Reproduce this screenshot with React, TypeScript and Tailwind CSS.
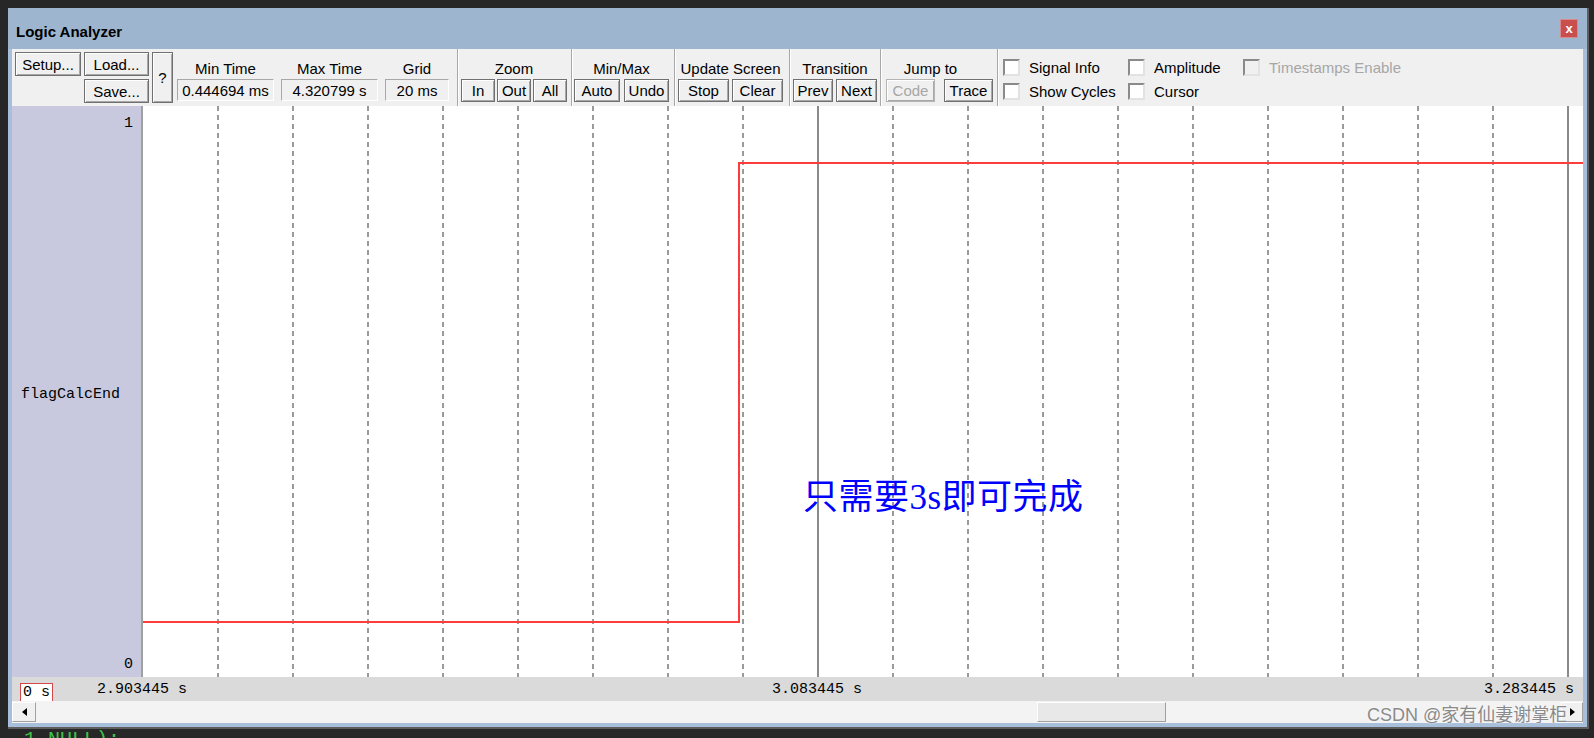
import React from "react";

const sans = "font-[family-name:Liberation_Sans,Arial,sans-serif]";
const mono = "font-[family-name:Liberation_Mono,monospace]";

function Btn({
  className = "",
  disabled = false,
  children,
}: {
  className?: string;
  disabled?: boolean;
  children: React.ReactNode;
}) {
  const tone = disabled
    ? "border-[#b4b4b4] text-[#a6a6a6]"
    : "border-[#707070] text-black";
  return (
    <div
      className={`flex items-center justify-center whitespace-nowrap border bg-[#f0f0f0] shadow-[inset_1px_1px_0_#ffffff,inset_-1px_-1px_0_#a8a8a8] ${tone} ${className}`}
    >
      {children}
    </div>
  );
}

function Sep({ className = "" }: { className?: string }) {
  return (
    <div
      className={`h-full w-[2px] border-l border-r border-l-[#a8a8a8] border-r-white ${className}`}
    />
  );
}

function Label({ children }: { children: React.ReactNode }) {
  return (
    <div className="flex h-[30px] items-end whitespace-nowrap pb-[2px]">
      {children}
    </div>
  );
}

function ValueBox({ label, value, className = "" }: { label: string; value: string; className?: string }) {
  return (
    <div className={`flex flex-col items-center ${className}`}>
      <Label>{label}</Label>
      <div className="flex h-[22px] w-full items-center justify-center whitespace-nowrap border border-t-[#a8a8a8] border-l-[#a8a8a8] border-r-white border-b-white">
        {value}
      </div>
    </div>
  );
}

function Check({ label, disabled = false }: { label: string; disabled?: boolean }) {
  return (
    <div className="flex h-[17px] items-center">
      <div
        className={`h-[17px] w-[17px] border-2 border-t-[#8a8a8a] border-l-[#8a8a8a] border-r-[#e2e2e2] border-b-[#e2e2e2] ${
          disabled ? "bg-[#f0f0f0]" : "bg-white"
        }`}
      />
      <span className={`ml-[9px] whitespace-nowrap ${disabled ? "text-[#a6a6a6]" : "text-black"}`}>
        {label}
      </span>
    </div>
  );
}

const gridLines = Array.from({ length: 19 }, (_, i) => (i + 1) * 75);

export default function App() {
  return (
    <div className={`h-[738px] w-[1594px] overflow-hidden bg-[#272727] ${sans}`}>
      <div className="ml-[8px] mt-[8px] w-[1581px] border-b-2 border-r-2 border-[#5e5e5e]">
        {/* window */}
        <div className="w-[1579px] bg-[#a7bfda]">
          {/* title bar */}
          <div className="flex h-[41px] items-start bg-[#9db5cf] pl-[8px] pr-[9px]">
            <span className="mt-[15px] text-[15px] font-bold leading-[17px] text-black">
              Logic Analyzer
            </span>
            <div className="ml-auto mt-[11px] flex h-[19px] w-[18px] items-center justify-center border border-[#d98a8a] bg-[#c94f4f] text-[13px] font-bold leading-none text-white">
              x
            </div>
          </div>

          <div className="px-[4px] pb-[4px]">
            {/* toolbar */}
            <div className="flex h-[57px] bg-[#f0f0f0] pl-[3px] text-[15px] leading-[17px] text-black">
              <div className="grid grid-cols-[66px_65px_21px] grid-rows-[24px_24px] gap-[3px] pt-[3px]">
                <Btn>Setup...</Btn>
                <Btn>Load...</Btn>
                <Btn className="row-span-2">?</Btn>
                <div />
                <Btn>Save...</Btn>
              </div>
              <ValueBox className="ml-[4px] w-[97px]" label="Min Time" value="0.444694 ms" />
              <ValueBox className="ml-[7px] w-[97px]" label="Max Time" value="4.320799 s" />
              <ValueBox className="ml-[7px] w-[64px]" label="Grid" value="20 ms" />
              <Sep className="ml-[8px]" />

              <div className="ml-[2px] flex flex-col items-center">
                <Label>Zoom</Label>
                <div className="flex gap-[2px]">
                  <Btn className="h-[23px] w-[34px]">In</Btn>
                  <Btn className="h-[23px] w-[34px]">Out</Btn>
                  <Btn className="h-[23px] w-[34px]">All</Btn>
                </div>
              </div>
              <Sep className="ml-[4px]" />

              <div className="ml-[1px] flex flex-col items-center">
                <Label>Min/Max</Label>
                <div className="flex gap-[4px]">
                  <Btn className="h-[23px] w-[46px]">Auto</Btn>
                  <Btn className="h-[23px] w-[45px]">Undo</Btn>
                </div>
              </div>
              <Sep className="ml-[5px]" />

              <div className="ml-[2px] flex flex-col items-center">
                <Label>Update Screen</Label>
                <div className="flex gap-[3px]">
                  <Btn className="h-[23px] w-[51px]">Stop</Btn>
                  <Btn className="h-[23px] w-[51px]">Clear</Btn>
                </div>
              </div>
              <Sep className="ml-[6px]" />

              <div className="ml-[2px] flex flex-col items-center">
                <Label>Transition</Label>
                <div className="flex gap-[3px]">
                  <Btn className="h-[23px] w-[40px]">Prev</Btn>
                  <Btn className="h-[23px] w-[41px]">Next</Btn>
                </div>
              </div>
              <Sep className="ml-[3px]" />

              <div className="ml-[4px] flex flex-col items-center">
                <Label>
                  <span className="mr-[18px]">Jump to</span>
                </Label>
                <div className="flex gap-[9px]">
                  <Btn disabled className="h-[23px] w-[49px]">Code</Btn>
                  <Btn className="h-[23px] w-[49px]">Trace</Btn>
                </div>
              </div>
              <Sep className="ml-[4px]" />

              <div className="ml-[4px] flex pt-[10px]">
                <div className="flex w-[125px] flex-col gap-[7px]">
                  <Check label="Signal Info" />
                  <Check label="Show Cycles" />
                </div>
                <div className="flex w-[115px] flex-col gap-[7px]">
                  <Check label="Amplitude" />
                  <Check label="Cursor" />
                </div>
                <div className="flex flex-col gap-[7px]">
                  <Check disabled label="Timestamps Enable" />
                </div>
              </div>
            </div>

            {/* plot area */}
            <div className="flex h-[571px]">
              <div
                className={`flex w-[131px] flex-col justify-between border-r-2 border-[#a0a0a0] bg-[#c8c9de] pb-[4px] pl-[9px] pr-[8px] pt-[9px] text-[15px] leading-[17px] text-black ${mono}`}
              >
                <span className="self-end">1</span>
                <span>flagCalcEnd</span>
                <span className="self-end">0</span>
              </div>
              <div className="relative flex-1 bg-white">
                <svg width="1440" height="571" className="block">
                  {gridLines.map((x) =>
                    x === 675 || x === 1425 ? (
                      <line key={x} x1={x} y1={0} x2={x} y2={571} stroke="#8a8a8a" strokeWidth={2} />
                    ) : (
                      <line
                        key={x}
                        x1={x}
                        y1={0}
                        x2={x}
                        y2={571}
                        stroke="#9a9a9a"
                        strokeWidth={2}
                        strokeDasharray="5 4"
                      />
                    )
                  )}
                  <polyline
                    points="0,516 596,516 596,57 1440,57"
                    fill="none"
                    stroke="#ff3c3c"
                    strokeWidth={2}
                  />
                </svg>
                <div className="absolute left-[660px] top-[374px] whitespace-nowrap font-[family-name:Liberation_Serif,Noto_Sans_CJK_SC,serif] text-[35px] leading-[35px] tracking-[0.5px] text-[#0000ff]">
                  只需要3s即可完成
                </div>
              </div>
            </div>

            {/* time axis */}
            <div className={`relative h-[24px] bg-[#dadada] text-[15px] leading-[17px] text-black ${mono}`}>
              <div className="absolute left-[8px] top-[6px] flex h-[19px] w-[33px] items-center border border-[#d04848] bg-white pl-[2px]">
                0 s
              </div>
              <span className="absolute left-[85px] top-[4px]">2.903445 s</span>
              <span className="absolute left-[760px] top-[4px]">3.083445 s</span>
              <span className="absolute right-[9px] top-[4px]">3.283445 s</span>
            </div>

            {/* scrollbar */}
            <div className="relative flex h-[22px] items-center bg-[#f3f3f3]">
              <div className="flex h-[20px] w-[24px] items-center justify-center border border-t-white border-l-white border-r-[#a0a0a0] border-b-[#a0a0a0] bg-[#f0f0f0]">
                <div className="h-0 w-0 border-y-[4px] border-r-[5px] border-y-transparent border-r-black" />
              </div>
              <div className="ml-[1001px] h-[20px] w-[129px] border border-t-white border-l-white border-r-[#a0a0a0] border-b-[#a0a0a0] bg-[#e8e8e8]" />
              <div className="ml-auto flex h-[20px] w-[22px] items-center justify-center border border-t-white border-l-white border-r-[#a0a0a0] border-b-[#a0a0a0] bg-[#f0f0f0]">
                <div className="h-0 w-0 border-y-[4px] border-l-[5px] border-y-transparent border-l-black" />
              </div>
              <div className="absolute left-[1355px] top-[3px] whitespace-nowrap font-[family-name:Liberation_Sans,Noto_Sans_CJK_SC,sans-serif] text-[18px] leading-[22px] text-[#8a8a8a] [text-shadow:0_0_2px_#ffffff]">
                CSDN @家有仙妻谢掌柜
              </div>
            </div>
          </div>
        </div>
      </div>
      <div className="h-[9px] overflow-hidden">
        <div className={`mt-[1px] whitespace-nowrap pl-[12px] text-[20px] leading-[20px] text-[#3fc24a] ${mono}`}>
          ,1,NULL);
        </div>
      </div>
    </div>
  );
}
